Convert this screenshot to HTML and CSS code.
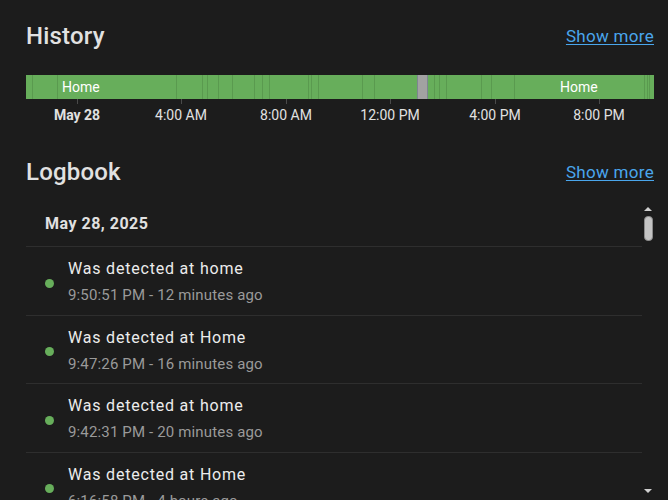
FILE: index.html
```html
<!DOCTYPE html>
<html lang="en">
<head>
  <meta charset="UTF-8" />
  <title>Person</title>
  <link rel="stylesheet" href="styles.css">
</head>
<body>
  <div class="page">

    <!-- History -->
    <section class="history">
      <div class="section-head">
        <h2>History</h2>
        <a class="more" href="#">Show more</a>
      </div>

      <div class="timeline">
        <svg class="bar" width="628" height="24" viewBox="0 0 628 24" preserveAspectRatio="none">
          <rect x="0" y="0" width="628" height="24" fill="#67ae5b"/>
          <g fill="#5a9a4f">
            <rect x="6" y="0" width="1" height="24"/>
            <rect x="31" y="0" width="1" height="24"/>
            <rect x="150" y="0" width="1" height="24"/>
            <rect x="176" y="0" width="1" height="24"/>
            <rect x="181" y="0" width="1" height="24"/>
            <rect x="192" y="0" width="1" height="24"/>
            <rect x="206" y="0" width="1" height="24"/>
            <rect x="228" y="0" width="1" height="24"/>
            <rect x="236" y="0" width="1" height="24"/>
            <rect x="243" y="0" width="1" height="24"/>
            <rect x="282" y="0" width="1" height="24"/>
            <rect x="285" y="0" width="1" height="24"/>
            <rect x="292" y="0" width="1" height="24"/>
            <rect x="336" y="0" width="1" height="24"/>
            <rect x="348" y="0" width="1" height="24"/>
            <rect x="408" y="0" width="1" height="24"/>
            <rect x="413" y="0" width="1" height="24"/>
            <rect x="420" y="0" width="1" height="24"/>
            <rect x="455" y="0" width="1" height="24"/>
            <rect x="465" y="0" width="1" height="24"/>
            <rect x="488" y="0" width="1" height="24"/>
            <rect x="618" y="0" width="1" height="24"/>
            <rect x="621" y="0" width="1" height="24"/>
            <rect x="623" y="0" width="1" height="24"/>
          </g>
          <rect x="391" y="0" width="11" height="24" fill="#7d8591"/>
          <rect x="392" y="0" width="9" height="24" fill="#a2a2a2"/>
        </svg>
        <span class="bar-label first">Home</span>
        <span class="bar-label last">Home</span>
      </div>

      <div class="axis">
        <div class="tick" style="left: 51px"><span class="bold">May 28</span></div>
        <div class="tick" style="left: 155px"><span>4:00 AM</span></div>
        <div class="tick" style="left: 260px"><span>8:00 AM</span></div>
        <div class="tick" style="left: 364px"><span>12:00 PM</span></div>
        <div class="tick" style="left: 469px"><span>4:00 PM</span></div>
        <div class="tick" style="left: 573px"><span>8:00 PM</span></div>
      </div>
    </section>

    <!-- Logbook -->
    <section class="logbook">
      <div class="section-head">
        <h2>Logbook</h2>
        <a class="more" href="#">Show more</a>
      </div>

      <div class="log-wrap">
        <div class="log-list">
          <div class="log-date">May 28, 2025</div>

          <div class="entry">
            <span class="dot"></span>
            <div class="entry-text">
              <div class="message">Was detected at home</div>
              <div class="when">9:50:51 PM - 12 minutes ago</div>
            </div>
          </div>

          <div class="entry">
            <span class="dot"></span>
            <div class="entry-text">
              <div class="message">Was detected at Home</div>
              <div class="when">9:47:26 PM - 16 minutes ago</div>
            </div>
          </div>

          <div class="entry">
            <span class="dot"></span>
            <div class="entry-text">
              <div class="message">Was detected at home</div>
              <div class="when">9:42:31 PM - 20 minutes ago</div>
            </div>
          </div>

          <div class="entry">
            <span class="dot"></span>
            <div class="entry-text">
              <div class="message">Was detected at Home</div>
              <div class="when">6:16:58 PM - 4 hours ago</div>
            </div>
          </div>
        </div>

        <div class="scrollbar">
          <span class="arrow up"></span>
          <span class="thumb"></span>
          <span class="track"></span>
          <span class="arrow down"></span>
        </div>
      </div>
    </section>

  </div>
</body>
</html>
```

FILE: styles.css
```css
* {
  box-sizing: border-box;
}

html, body {
  height: 100%;
}

body {
  margin: 0;
  background: #1c1c1c;
  color: #e1e1e1;
  font-family: Roboto, 'Noto Sans', sans-serif;
  overflow: hidden;
}

.page {
  padding: 20px 14px 0 26px;
  height: 100%;
  display: flex;
  flex-direction: column;
}

.section-head {
  display: flex;
  justify-content: space-between;
  align-items: center;
  height: 32px;
}

.section-head h2 {
  margin: 0;
  font-size: 24px;
  font-weight: 500;
  line-height: 32px;
  letter-spacing: 0.2px;
  color: #e1e1e1;
}

.more {
  color: #4aa6ec;
  font-size: 17px;
  letter-spacing: 0.3px;
  text-decoration: underline;
  text-underline-offset: 2px;
}

/* History timeline */

.history {
  width: 628px;
}

.timeline {
  position: relative;
  margin-top: 23px;
  height: 24px;
}

.bar {
  display: block;
}

.bar-label {
  position: absolute;
  top: 3px;
  font-size: 14px;
  line-height: 18px;
  color: #fff;
}

.bar-label.first {
  left: 36px;
}

.bar-label.last {
  left: 534px;
}

.axis {
  position: relative;
  height: 30px;
}

.tick {
  position: absolute;
  top: 0;
  width: 1px;
  height: 5px;
  background: #4a4a4a;
}

.tick span {
  position: absolute;
  top: 7px;
  left: 0;
  transform: translateX(-50%);
  white-space: nowrap;
  font-size: 14px;
  line-height: 18px;
  color: #e1e1e1;
}

.tick .bold {
  font-weight: 700;
}

/* Logbook */

.logbook {
  margin-top: 27px;
  flex: 1;
  display: flex;
  flex-direction: column;
  min-height: 0;
}

.log-wrap {
  flex: 1;
  display: flex;
  min-height: 0;
  margin-top: 13px;
}

.log-list {
  flex: 1;
  overflow: hidden;
}

.log-date {
  height: 46px;
  padding-left: 19px;
  display: flex;
  align-items: center;
  font-size: 16px;
  font-weight: 700;
  letter-spacing: 0.5px;
  border-bottom: 1px solid #2e2e2e;
}

.entry {
  display: flex;
  align-items: center;
  padding: 12px 0 9.5px 19px;
  border-bottom: 1px solid #2e2e2e;
}

.dot {
  width: 9px;
  height: 9px;
  border-radius: 50%;
  background: #67ae5b;
  margin-right: 14px;
  margin-top: 2px;
  flex-shrink: 0;
}

.message {
  font-size: 16px;
  line-height: 20px;
  letter-spacing: 0.8px;
  color: #ececec;
}

.when {
  margin-top: 6px;
  font-size: 15px;
  line-height: 20px;
  letter-spacing: 0.15px;
  color: #9a9a9a;
}

/* fake scrollbar */

.scrollbar {
  width: 12px;
  display: flex;
  flex-direction: column;
  align-items: center;
  padding-top: 6px;
  padding-bottom: 7px;
}

.arrow {
  width: 0;
  height: 0;
  border-left: 4px solid transparent;
  border-right: 4px solid transparent;
}

.arrow.up {
  border-bottom: 4px solid #d0d0d0;
}

.arrow.down {
  border-top: 4px solid #d0d0d0;
}

.thumb {
  margin-top: 5px;
  width: 9px;
  height: 25px;
  border-radius: 4px;
  background: #c4c4c4;
  border: 1px solid #8a8a8a;
}

.track {
  flex: 1;
}
```
